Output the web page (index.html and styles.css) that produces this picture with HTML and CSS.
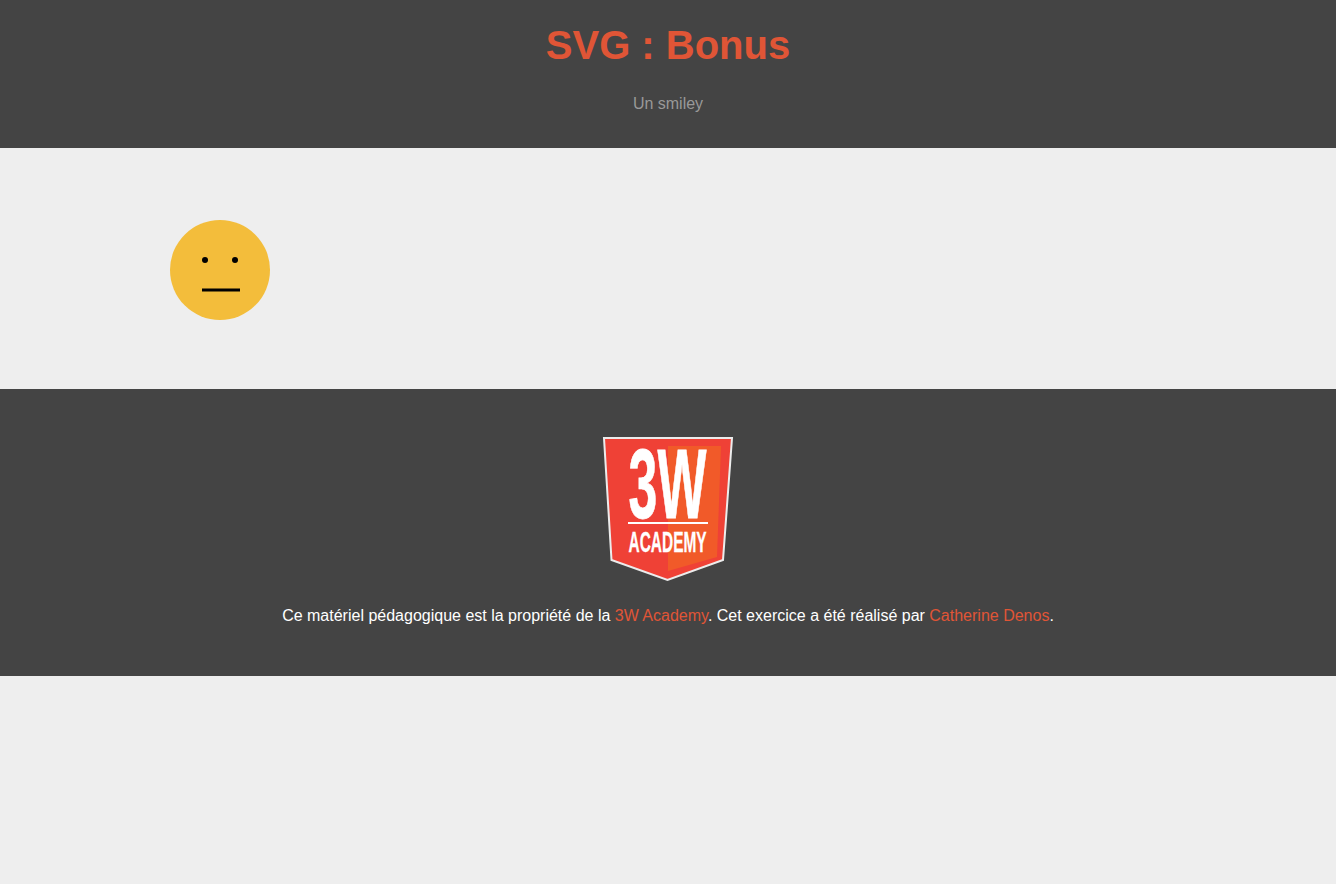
FILE: index.html
```html
<!DOCTYPE html>
<html lang="fr">
<head>
<meta charset="utf-8">
<title>SVG : Bonus</title>
<link rel="stylesheet" href="styles.css">
</head>
<body>
<header class="site-header">
  <h1 class="title">SVG : Bonus</h1>
  <p class="subtitle">Un smiley</p>
</header>
<main class="content">
  <svg class="smiley" width="100" height="100" viewBox="0 0 100 100" role="img" aria-label="Smiley">
    <circle cx="50" cy="50" r="50" fill="#f3bd3b"/>
    <circle cx="35" cy="40" r="3" fill="#000"/>
    <circle cx="65" cy="40" r="3" fill="#000"/>
    <line x1="32" y1="70" x2="70" y2="70" stroke="#000" stroke-width="3"/>
  </svg>
</main>
<footer class="site-footer">
  <svg class="logo" width="130" height="144" viewBox="0 0 130 144" role="img" aria-label="3W Academy">
    <polygon points="1,1 129,1 120,123 64.500,143 8.500,123" fill="#ef4136" stroke="#ececec" stroke-width="2"/>
    <polygon points="65,9 118,9 114,120 65,134" fill="#f15a29"/>
    <text class="logo-big" transform="translate(25.500 80.500) scale(0.53 1)">3W</text>
    <rect x="25" y="85" width="80" height="2" fill="#fff"/>
    <text class="logo-small" transform="translate(25.500 114.500) scale(0.515 1)">ACADEMY</text>
  </svg>
  <p class="credits">Ce matériel pédagogique est la propriété de la <a href="#">3W Academy</a>. Cet exercice a été réalisé par <a href="#">Catherine Denos</a>.</p>
</footer>
</body>
</html>
```
FILE: styles.css
```css
* {
  box-sizing: border-box;
}
html, body {
  margin: 0;
  padding: 0;
}
body {
  background: #eeeeee;
  font-family: "Liberation Sans", Arial, sans-serif;
  font-size: 16px;
  line-height: 24px;
}
.site-header {
  height: 148px;
  background: #444444;
  text-align: center;
  padding-top: 20px;
}
.title {
  margin: 0;
  font-size: 40px;
  line-height: 50px;
  font-weight: 700;
  color: #e05536;
}
.subtitle {
  margin: 22px 0 0;
  color: #999999;
}
.content {
  height: 241px;
  width: 996px;
  margin: 0 auto;
  padding-top: 72px;
}
.smiley {
  display: block;
}
.site-footer {
  height: 287px;
  background: #444444;
  padding-top: 48px;
  text-align: center;
}
.logo {
  display: block;
  margin: 0 auto;
  overflow: visible;
}
.logo-big {
  font-family: "Liberation Sans", Arial, sans-serif;
  font-weight: 700;
  font-size: 98px;
  fill: #ffffff;
  stroke: #ffffff;
  stroke-width: 0.8px;
}
.logo-small {
  font-family: "Liberation Sans", Arial, sans-serif;
  font-weight: 700;
  font-size: 30px;
  fill: #ffffff;
  stroke: #ffffff;
  stroke-width: 0.3px;
}
.credits {
  margin: 23px 0 0;
  color: #ffffff;
}
.credits a {
  color: #e05536;
  text-decoration: none;
}
```
